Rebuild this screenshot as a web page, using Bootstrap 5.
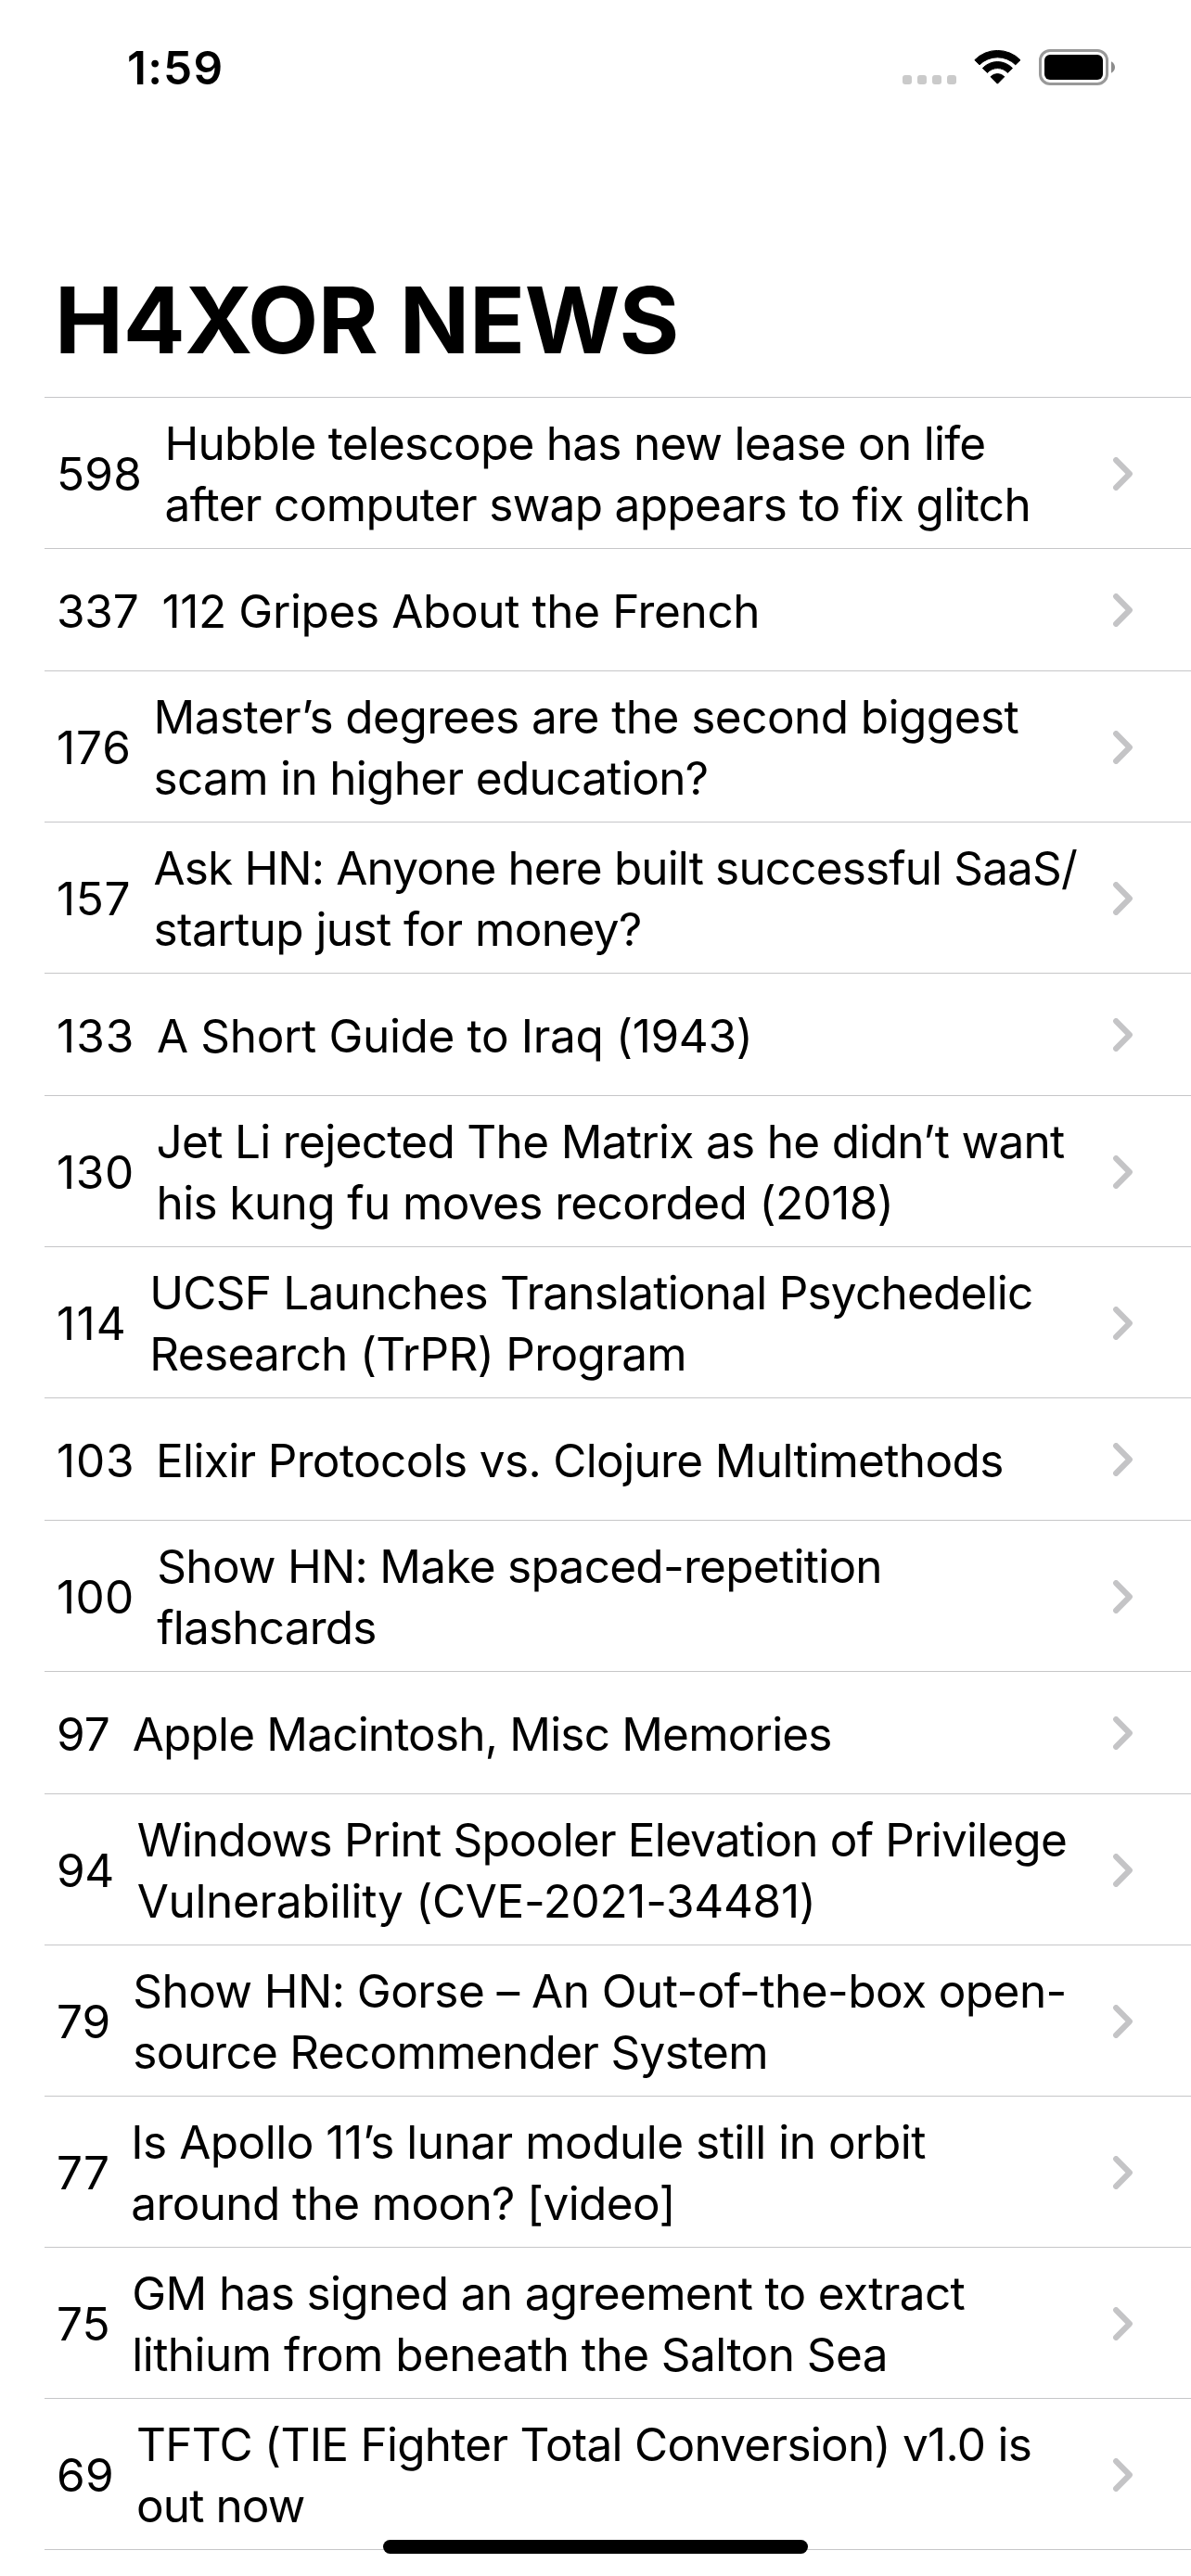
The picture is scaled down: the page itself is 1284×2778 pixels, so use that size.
<!DOCTYPE html>
<html lang="en">
<head>
<meta charset="utf-8">
<meta name="viewport" content="width=device-width, initial-scale=1">
<title>H4XOR NEWS</title>
<link href="https://cdn.jsdelivr.net/npm/bootstrap@5.3.0/dist/css/bootstrap.min.css" rel="stylesheet">
<style>
  body { font-family: Inter, "Liberation Sans", sans-serif; font-size: 49.5px; line-height: 66px; color: #000; background: #fff; }
  .phone { width: 1284px; height: 2778px; }
  .status-bar { height: 132px; padding: 40px 82px 0 137px; }
  .clock { font-weight: 600; letter-spacing: 1.2px; }
  .signal { gap: 6px; margin: 41px 19px 0 0; }
  .signal i { width: 10px; height: 10px; border-radius: 3px; background: #cacaca; }
  .wifi { margin: 14px 19px 0 0; }
  .battery { margin-top: 13px; }
  .page-head { height: 296px; padding: 0 59px 23px; }
  .page-head h1 { font-size: 99px; line-height: 120px; font-weight: 700; letter-spacing: -.3px; }
  .stories { --bs-list-group-border-color: #c6c6c8; --bs-list-group-color: #000; --bs-list-group-bg: #fff; margin-left: 48px; border-top: 1px solid #c6c6c8; }
  .stories .list-group-item { height: 163px; padding: 2px 62px 0 13px; border-width: 0 0 1px; }
  .stories .list-group-item.one-line { height: 132px; }
  .stories .list-group-item:last-child { border-bottom-width: 1px; }
  .points { width: var(--w); letter-spacing: var(--t); }
  .headline span { display: block; letter-spacing: var(--t); }
  .chevron { stroke: #c4c4c6; margin-bottom: 1px; }
  .home-bar { width: 458px; height: 15px; left: 413px; top: 2739px; }
</style>
<script src="https://cdn.jsdelivr.net/npm/bootstrap@5.3.0/dist/js/bootstrap.bundle.min.js"></script>
</head>
<body>
<svg class="d-none" xmlns="http://www.w3.org/2000/svg">
  <symbol id="chev" viewBox="0 0 22 36"><path d="M3.2 3.2 17.8 18 3.2 32.8" fill="none" stroke-width="6.2" stroke-linecap="round" stroke-linejoin="round"/></symbol>
</svg>
<div class="phone position-relative overflow-hidden">
  <header class="status-bar d-flex align-items-start">
    <div class="clock">1:59</div>
    <div class="signal d-flex ms-auto"><i></i><i></i><i></i><i></i></div>
    <svg class="wifi flex-shrink-0" width="51" height="38" viewBox="0 0 51 38" fill="#000" stroke="#000" stroke-width="1" stroke-linejoin="round">
      <path d="M.8 10.7A34.6 34.6 0 0 1 50 10.7L44.8 15.8A27.6 27.6 0 0 0 6 15.8Z"/>
      <path d="M9.3 19.6A22 22 0 0 1 41.5 19.6L36.3 24.4A14.8 14.8 0 0 0 14.5 24.4Z"/>
      <path d="M18 28.7A10.4 10.4 0 0 1 32.8 28.7L25.4 36.2Z"/>
    </svg>
    <svg class="battery flex-shrink-0" width="82" height="39" viewBox="0 0 82 39">
      <rect x="1.5" y="1.5" width="72" height="36" rx="10.5" fill="none" stroke="#999" stroke-width="3"/>
      <rect x="6" y="6" width="63" height="27" rx="6" fill="#000"/>
      <path d="M78 13.2Q82 15.500 82 19.500T78 25.800Z" fill="#8c8c8c"/>
    </svg>
  </header>
  <div class="page-head d-flex align-items-end"><h1 class="m-0 text-nowrap">H4XOR NEWS</h1></div>
  <ul class="stories list-group list-group-flush rounded-0 text-nowrap">
    <li class="list-group-item d-flex align-items-center"><div class="points flex-shrink-0" style="--w:116.500px;--t:.2px">598</div><div class="headline"><span style="--t:-.75px">Hubble telescope has new lease on life</span><span style="--t:-.66px">after computer swap appears to fix glitch</span></div><svg class="chevron ms-auto" width="22" height="36"><use href="#chev"/></svg></li>
    <li class="list-group-item one-line d-flex align-items-center"><div class="points flex-shrink-0" style="--w:113.500px;--t:-.2px">337</div><div class="headline"><span style="--t:-.38px">112 Gripes About the French</span></div><svg class="chevron ms-auto" width="22" height="36"><use href="#chev"/></svg></li>
    <li class="list-group-item d-flex align-items-center"><div class="points flex-shrink-0" style="--w:104.500px;--t:.9px">176</div><div class="headline"><span style="--t:-.55px">Master’s degrees are the second biggest</span><span style="--t:-.68px">scam in higher education?</span></div><svg class="chevron ms-auto" width="22" height="36"><use href="#chev"/></svg></li>
    <li class="list-group-item d-flex align-items-center"><div class="points flex-shrink-0" style="--w:104.500px;--t:.6px">157</div><div class="headline"><span style="--t:-.86px">Ask HN: Anyone here built successful SaaS/</span><span style="--t:-.57px">startup just for money?</span></div><svg class="chevron ms-auto" width="22" height="36"><use href="#chev"/></svg></li>
    <li class="list-group-item one-line d-flex align-items-center"><div class="points flex-shrink-0" style="--w:108px;--t:1px">133</div><div class="headline"><span style="--t:-.355px">A Short Guide to Iraq (1943)</span></div><svg class="chevron ms-auto" width="22" height="36"><use href="#chev"/></svg></li>
    <li class="list-group-item d-flex align-items-center"><div class="points flex-shrink-0" style="--w:107.500px;--t:.65px">130</div><div class="headline"><span style="--t:-.68px">Jet Li rejected The Matrix as he didn’t want</span><span style="--t:-.61px">his kung fu moves recorded (2018)</span></div><svg class="chevron ms-auto" width="22" height="36"><use href="#chev"/></svg></li>
    <li class="list-group-item d-flex align-items-center"><div class="points flex-shrink-0" style="--w:100.300px;--t:1.3px">114</div><div class="headline"><span style="--t:-.78px">UCSF Launches Translational Psychedelic</span><span style="--t:-.66px">Research (TrPR) Program</span></div><svg class="chevron ms-auto" width="22" height="36"><use href="#chev"/></svg></li>
    <li class="list-group-item one-line d-flex align-items-center"><div class="points flex-shrink-0" style="--w:107px;--t:.8px">103</div><div class="headline"><span style="--t:-.65px">Elixir Protocols vs. Clojure Multimethods</span></div><svg class="chevron ms-auto" width="22" height="36"><use href="#chev"/></svg></li>
    <li class="list-group-item d-flex align-items-center"><div class="points flex-shrink-0" style="--w:108.300px;--t:.3px">100</div><div class="headline"><span style="--t:-.72px">Show HN: Make spaced-repetition</span><span style="--t:-.8px">flashcards</span></div><svg class="chevron ms-auto" width="22" height="36"><use href="#chev"/></svg></li>
    <li class="list-group-item one-line d-flex align-items-center"><div class="points flex-shrink-0" style="--w:81.700px;--t:0px">97</div><div class="headline"><span style="--t:-.82px">Apple Macintosh, Misc Memories</span></div><svg class="chevron ms-auto" width="22" height="36"><use href="#chev"/></svg></li>
    <li class="list-group-item d-flex align-items-center"><div class="points flex-shrink-0" style="--w:86.700px;--t:-.4px">94</div><div class="headline"><span style="--t:-.805px">Windows Print Spooler Elevation of Privilege</span><span style="--t:-.33px">Vulnerability (CVE-2021-34481)</span></div><svg class="chevron ms-auto" width="22" height="36"><use href="#chev"/></svg></li>
    <li class="list-group-item d-flex align-items-center"><div class="points flex-shrink-0" style="--w:82.300px;--t:0px">79</div><div class="headline"><span style="--t:-.56px">Show HN: Gorse – An Out-of-the-box open-</span><span style="--t:-.7px">source Recommender System</span></div><svg class="chevron ms-auto" width="22" height="36"><use href="#chev"/></svg></li>
    <li class="list-group-item d-flex align-items-center"><div class="points flex-shrink-0" style="--w:80.300px;--t:0px">77</div><div class="headline"><span style="--t:-.5px">Is Apollo 11’s lunar module still in orbit</span><span style="--t:-.63px">around the moon? [video]</span></div><svg class="chevron ms-auto" width="22" height="36"><use href="#chev"/></svg></li>
    <li class="list-group-item d-flex align-items-center"><div class="points flex-shrink-0" style="--w:81.300px;--t:0px">75</div><div class="headline"><span style="--t:-.65px">GM has signed an agreement to extract</span><span style="--t:-.55px">lithium from beneath the Salton Sea</span></div><svg class="chevron ms-auto" width="22" height="36"><use href="#chev"/></svg></li>
    <li class="list-group-item d-flex align-items-center"><div class="points flex-shrink-0" style="--w:86px;--t:.3px">69</div><div class="headline"><span style="--t:-.73px">TFTC (TIE Fighter Total Conversion) v1.0 is</span><span style="--t:-.9px">out now</span></div><svg class="chevron ms-auto" width="22" height="36"><use href="#chev"/></svg></li>
  </ul>
  <div class="home-bar position-absolute bg-black rounded-pill"></div>
</div>
</body>
</html>
